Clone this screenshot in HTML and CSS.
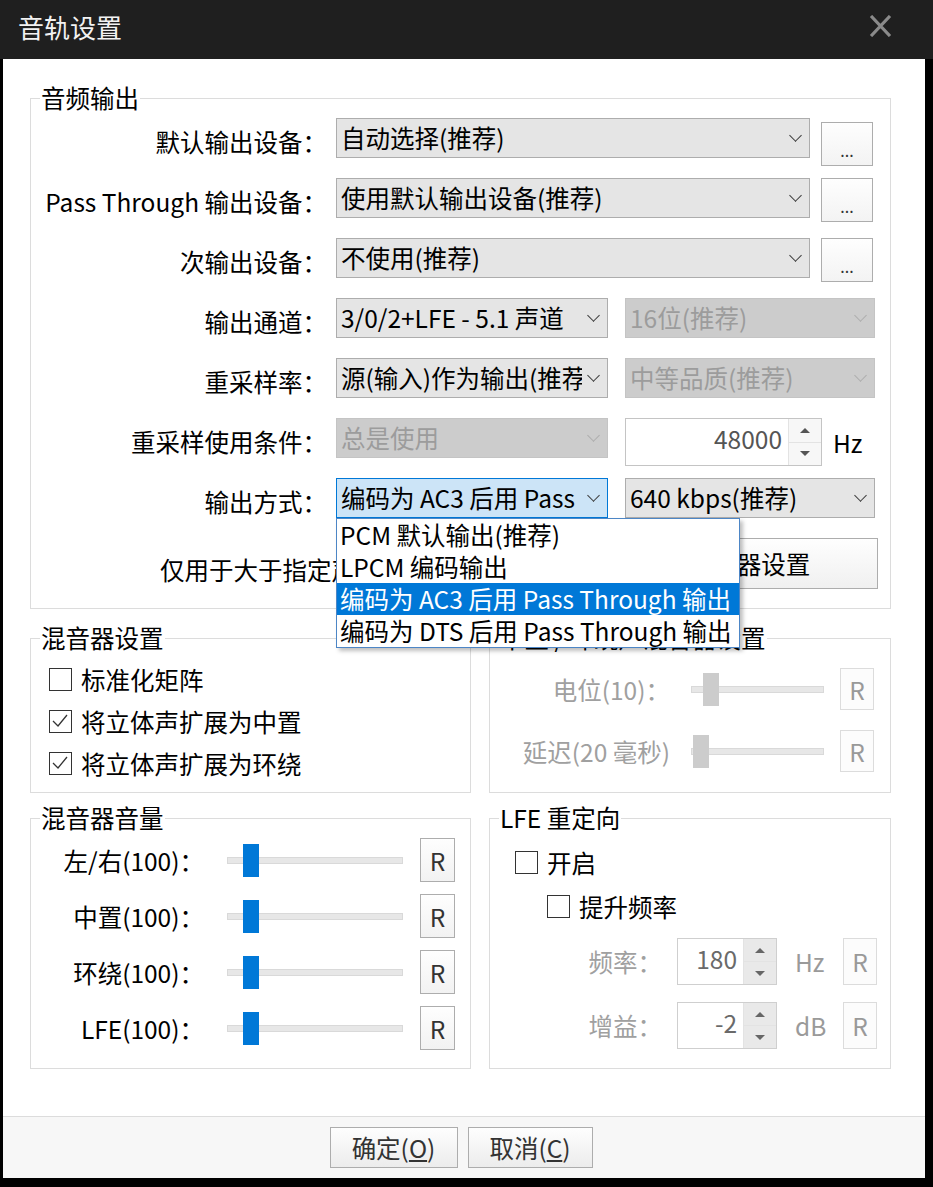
FILE: index.html
```html
<!DOCTYPE html>
<html lang="zh-CN">
<head>
    <meta charset="UTF-8">
    <title>音轨设置</title>
    <link rel="stylesheet" href="styles.css">
</head>
<body>
    <div class="titlebar">
        <h1>音轨设置</h1>
        <svg class="close" width="23" height="22" viewBox="0 0 23 22"><path d="M2 1 L21 21 M21 1 L2 21" stroke="#8a8a8a" stroke-width="3.2" fill="none"/></svg>
    </div>
    <div class="window">
        <div class="content">
            <fieldset class="group top">
                <legend>音频输出</legend>
                <div class="rows">
                    <div class="row">
                        <span class="lbl">默认输出设备：</span>
                        <div class="combo wide"><span class="txt">自动选择(推荐)</span><span class="arrow"></span></div>
                        <button class="more first">...</button>
                    </div>
                    <div class="row">
                        <span class="lbl">Pass Through 输出设备：</span>
                        <div class="combo wide"><span class="txt">使用默认输出设备(推荐)</span><span class="arrow"></span></div>
                        <button class="more">...</button>
                    </div>
                    <div class="row">
                        <span class="lbl">次输出设备：</span>
                        <div class="combo wide"><span class="txt">不使用(推荐)</span><span class="arrow"></span></div>
                        <button class="more">...</button>
                    </div>
                    <div class="row">
                        <span class="lbl">输出通道：</span>
                        <div class="combo half"><span class="txt">3/0/2+LFE - 5.1 声道</span><span class="arrow"></span></div>
                        <div class="combo side off"><span class="txt">16位(推荐)</span><span class="arrow"></span></div>
                    </div>
                    <div class="row">
                        <span class="lbl">重采样率：</span>
                        <div class="combo half"><span class="txt">源(输入)作为输出(推荐)</span><span class="arrow"></span></div>
                        <div class="combo side off"><span class="txt">中等品质(推荐)</span><span class="arrow"></span></div>
                    </div>
                    <div class="row">
                        <span class="lbl">重采样使用条件：</span>
                        <div class="combo half off"><span class="txt">总是使用</span><span class="arrow"></span></div>
                        <div class="spin rate">
                            <span class="val">48000</span>
                            <span class="btns"><span class="up"></span><span class="dn"></span></span>
                        </div>
                        <span class="hz">Hz</span>
                    </div>
                    <div class="row">
                        <span class="lbl">输出方式：</span>
                        <div class="combo half focus">
                            <span class="txt">编码为 AC3 后用 Pass</span><span class="arrow"></span>
                            <div class="list">
                                <div>PCM 默认输出(推荐)</div>
                                <div>LPCM 编码输出</div>
                                <div class="sel">编码为 AC3 后用 Pass Through 输出</div>
                                <div>编码为 DTS 后用 Pass Through 输出</div>
                            </div>
                        </div>
                        <div class="combo side"><span class="txt">640 kbps(推荐)</span><span class="arrow"></span></div>
                    </div>
                    <div class="row last">
                        <span class="note">仅用于大于指定声道数的音源</span>
                        <button class="big">编码器设置</button>
                    </div>
                </div>
            </fieldset>

            <div class="cols">
                <fieldset class="group left">
                    <legend>混音器设置</legend>
                    <div class="checks">
                        <label class="check"><span class="box"></span>标准化矩阵</label>
                        <label class="check"><span class="box"><svg width="20" height="20" viewBox="0 0 20 20"><path d="M3 10 L8 15 L17 4" stroke="#333" stroke-width="1.3" fill="none"/></svg></span>将立体声扩展为中置</label>
                        <label class="check"><span class="box"><svg width="20" height="20" viewBox="0 0 20 20"><path d="M3 10 L8 15 L17 4" stroke="#333" stroke-width="1.3" fill="none"/></svg></span>将立体声扩展为环绕</label>
                    </div>
                </fieldset>
                <fieldset class="group right off">
                    <legend>中置 / 环绕声混音器设置</legend>
                    <div class="sliders">
                        <div class="srow">
                            <span class="slbl">电位(10)：</span>
                            <div class="slider"><span class="track"></span><span class="thumb" style="left: 12px"></span></div>
                            <button class="rbtn">R</button>
                        </div>
                        <div class="srow">
                            <span class="slbl">延迟(20 毫秒)</span>
                            <div class="slider"><span class="track"></span><span class="thumb" style="left: 2px"></span></div>
                            <button class="rbtn">R</button>
                        </div>
                    </div>
                </fieldset>
            </div>

            <div class="cols second">
                <fieldset class="group left">
                    <legend>混音器音量</legend>
                    <div class="vrows">
                        <div class="vrow">
                            <span class="vlbl">左/右(100)：</span>
                            <div class="slider long"><span class="track"></span><span class="thumb" style="left: 16px"></span></div>
                            <button class="rbtn v">R</button>
                        </div>
                        <div class="vrow">
                            <span class="vlbl">中置(100)：</span>
                            <div class="slider long"><span class="track"></span><span class="thumb" style="left: 16px"></span></div>
                            <button class="rbtn v">R</button>
                        </div>
                        <div class="vrow">
                            <span class="vlbl">环绕(100)：</span>
                            <div class="slider long"><span class="track"></span><span class="thumb" style="left: 16px"></span></div>
                            <button class="rbtn v">R</button>
                        </div>
                        <div class="vrow">
                            <span class="vlbl">LFE(100)：</span>
                            <div class="slider long"><span class="track"></span><span class="thumb" style="left: 16px"></span></div>
                            <button class="rbtn v">R</button>
                        </div>
                    </div>
                </fieldset>
                <fieldset class="group right">
                    <legend>LFE 重定向</legend>
                    <div class="lfe">
                        <label class="check lrow a"><span class="box"></span>开启</label>
                        <label class="check lrow b"><span class="box"></span>提升频率</label>
                        <div class="nrow off">
                            <span class="nlbl">频率：</span>
                            <div class="spin small">
                                <span class="val">180</span>
                                <span class="btns"><span class="up"></span><span class="dn"></span></span>
                            </div>
                            <span class="unit">Hz</span>
                            <button class="rbtn l">R</button>
                        </div>
                        <div class="nrow off gain">
                            <span class="nlbl">增益：</span>
                            <div class="spin small">
                                <span class="val">-2</span>
                                <span class="btns"><span class="up"></span><span class="dn"></span></span>
                            </div>
                            <span class="unit">dB</span>
                            <button class="rbtn l">R</button>
                        </div>
                    </div>
                </fieldset>
            </div>
        </div>
        <div class="footer">
            <button class="btn ok">确定(<u>O</u>)</button>
            <button class="btn cancel">取消(<u>C</u>)</button>
        </div>
    </div>
</body>
</html>
```

FILE: styles.css
```css
* {
    box-sizing: border-box;
}
body {
    margin: 0;
    width: 933px;
    height: 1187px;
    background: #000;
    font-family: "Noto Sans CJK SC", sans-serif;
    font-size: 24.5px;
    color: #000;
    overflow: hidden;
}
button {
    font: inherit;
    padding: 0;
    color: #333;
}
.titlebar {
    height: 59px;
    background: #1f1f1f;
    display: flex;
    align-items: center;
    justify-content: space-between;
    padding: 0 41px 0 18px;
}
.titlebar h1 {
    margin: -6px 0 0;
    font-size: 26px;
    font-weight: normal;
    color: #f2f2f2;
    line-height: 40px;
}
.close {
    margin-top: -8px;
}
.window {
    margin-left: 3px;
    width: 922px;
    background: #fff;
}
.content {
    height: 1057px;
    padding: 27px 0 0 27px;
}
.group {
    margin: 0;
    padding: 0;
    border: 1px solid #dcdcdc;
    min-width: 0;
}
.group legend {
    margin-left: 9px;
    padding: 0 1px;
    line-height: 24px;
    color: #000;
}
.top {
    width: 861px;
}
.rows {
    padding: 8px 0 19px;
}
.row {
    display: flex;
    align-items: flex-start;
    height: 40px;
    margin-bottom: 20px;
}
.row.last {
    height: 51px;
    margin-bottom: 0;
}
.lbl {
    width: 296px;
    flex-shrink: 0;
    text-align: right;
    line-height: 48px;
    white-space: nowrap;
}
.combo {
    position: relative;
    display: flex;
    height: 40px;
    margin-left: 9px;
    border: 1px solid #adadad;
    background: #e5e5e5;
}
.combo .txt {
    flex: 1;
    overflow: hidden;
    white-space: nowrap;
    padding-left: 4px;
    line-height: 38px;
}
.combo .arrow {
    position: relative;
    width: 25px;
    flex-shrink: 0;
}
.combo .arrow::after {
    content: "";
    position: absolute;
    left: 7px;
    top: 12px;
    width: 8px;
    height: 8px;
    border-right: 1px solid #3a3a3a;
    border-bottom: 1px solid #3a3a3a;
    transform: rotate(45deg);
}
.wide {
    width: 474px;
}
.half {
    width: 272px;
}
.combo.side {
    width: 250px;
    margin-left: 17px;
}
.combo.off {
    background: #cccccc;
    border-color: #c4c4c4;
    color: #9c9c9c;
}
.combo.off .arrow::after {
    border-color: #adadad;
}
.combo.focus {
    background: #cce4f7;
    border-color: #0078d7;
}
.more {
    width: 52px;
    height: 44px;
    margin-left: 11px;
    border: 1px solid #adadad;
    background: linear-gradient(#fefefe, #f3f3f3);
    font-size: 16px;
    padding-top: 12px;
}
.more.first {
    margin-top: 4px;
}
.list {
    position: absolute;
    left: -1px;
    top: 39px;
    width: 404px;
    border: 1px solid #4d86c6;
    background: #fff;
    box-shadow: 3px 3px 4px rgba(0, 0, 0, 0.25);
    z-index: 5;
}
.list div {
    height: 32px;
    line-height: 32px;
    padding-left: 3px;
    white-space: nowrap;
}
.list .sel {
    background: #0078d7;
    color: #fff;
}
.note {
    width: 589px;
    padding-left: 129px;
    line-height: 64px;
    white-space: nowrap;
    overflow: hidden;
}
.big {
    width: 258px;
    height: 51px;
    border: 1px solid #adadad;
    background: linear-gradient(#fefefe, #f0f0f0);
    color: #000;
}
.spin {
    display: flex;
    border: 1px solid #c4c4c4;
    background: #fff;
}
.spin.rate {
    width: 197px;
    height: 48px;
    margin-left: 17px;
}
.spin .val {
    flex: 1;
    text-align: right;
    padding-right: 6px;
    line-height: 40px;
    color: #555;
}
.spin .btns {
    width: 33px;
    display: flex;
    flex-direction: column;
    border-left: 1px solid #e3e3e3;
}
.spin .btns span {
    flex: 1;
    display: flex;
    align-items: center;
    justify-content: center;
    background: #f7f7f7;
}
.spin .btns span + span {
    border-top: 1px solid #e3e3e3;
}
.spin .btns span::after {
    content: "";
    border-left: 5px solid transparent;
    border-right: 5px solid transparent;
}
.spin .up::after {
    border-bottom: 5px solid #555;
}
.spin .dn::after {
    border-top: 5px solid #555;
}
.hz {
    margin-left: 11px;
    line-height: 50px;
}
.cols {
    display: flex;
    gap: 18px;
    margin-top: 17px;
}
.cols.second {
    margin-top: 13px;
}
.left {
    width: 441px;
}
.right {
    width: 402px;
}
.checks {
    padding: 8px 0 8px 18px;
}
.check {
    display: flex;
    align-items: center;
    gap: 9px;
    height: 42px;
}
.box {
    width: 23px;
    height: 23px;
    border: 1px solid #333;
    background: #fff;
}
.box svg {
    display: block;
}
.sliders {
    padding: 8px 0 9px;
}
.srow {
    display: flex;
    align-items: center;
    height: 62px;
}
.slbl {
    width: 180px;
    text-align: right;
    white-space: nowrap;
}
.off .slbl,
.off .nlbl {
    color: #a0a0a0;
}
.slider {
    position: relative;
    width: 133px;
    height: 33px;
    margin-left: 21px;
}
.slider .track {
    position: absolute;
    left: 0;
    right: 0;
    top: 13px;
    height: 7px;
    background: #e7e7e7;
    border: 1px solid #d9d9d9;
}
.slider .thumb {
    position: absolute;
    top: 0;
    width: 16px;
    height: 33px;
    background: #0078d7;
}
.off .thumb {
    background: #cccccc;
}
.rbtn {
    width: 34px;
    height: 42px;
    margin-left: 16px;
    border: 1px solid #adadad;
    background: linear-gradient(#fefefe, #f2f2f2);
}
.off .rbtn {
    border-color: #dcdcdc;
    background: #fcfcfc;
    color: #999;
}
.vrows {
    padding: 2px 0 12px;
}
.vrow {
    display: flex;
    align-items: center;
    height: 56px;
}
.vlbl {
    width: 173px;
    text-align: right;
    white-space: nowrap;
}
.slider.long {
    width: 176px;
    margin-left: 23px;
}
.rbtn.v {
    width: 35px;
    height: 44px;
    margin-left: 17px;
}
.lfe {
    padding: 10px 0 19px;
}
.lrow {
    height: 44px;
}
.lrow.a {
    padding-left: 25px;
}
.lrow.b {
    padding-left: 57px;
}
.nrow {
    display: flex;
    align-items: center;
    height: 47px;
    margin-top: 10px;
}
.nrow.gain {
    margin-top: 17px;
}
.nlbl {
    width: 172px;
    text-align: right;
}
.spin.small {
    width: 100px;
    height: 47px;
    margin-left: 15px;
    border-color: #cfcfcf;
}
.spin.small .val {
    color: #6a6a6a;
}
.spin.small .btns span {
    background: #e9e9e9;
}
.spin.small .btns span::after {
    border-top-color: #666;
    border-bottom-color: #666;
}
.unit {
    width: 66px;
    padding-left: 18px;
    color: #9a9a9a;
}
.rbtn.l {
    height: 47px;
    margin-left: 0;
}
.footer {
    height: 62px;
    border-top: 1px solid #dcdcdc;
    background: #f7f7f7;
    display: flex;
    justify-content: center;
    align-items: center;
    gap: 10px;
    padding-right: 6px;
}
.btn {
    width: 128px;
    height: 41px;
    border: 1px solid #adadad;
    background: linear-gradient(#fefefe, #ececec);
}
.btn.cancel {
    width: 125px;
}
```
